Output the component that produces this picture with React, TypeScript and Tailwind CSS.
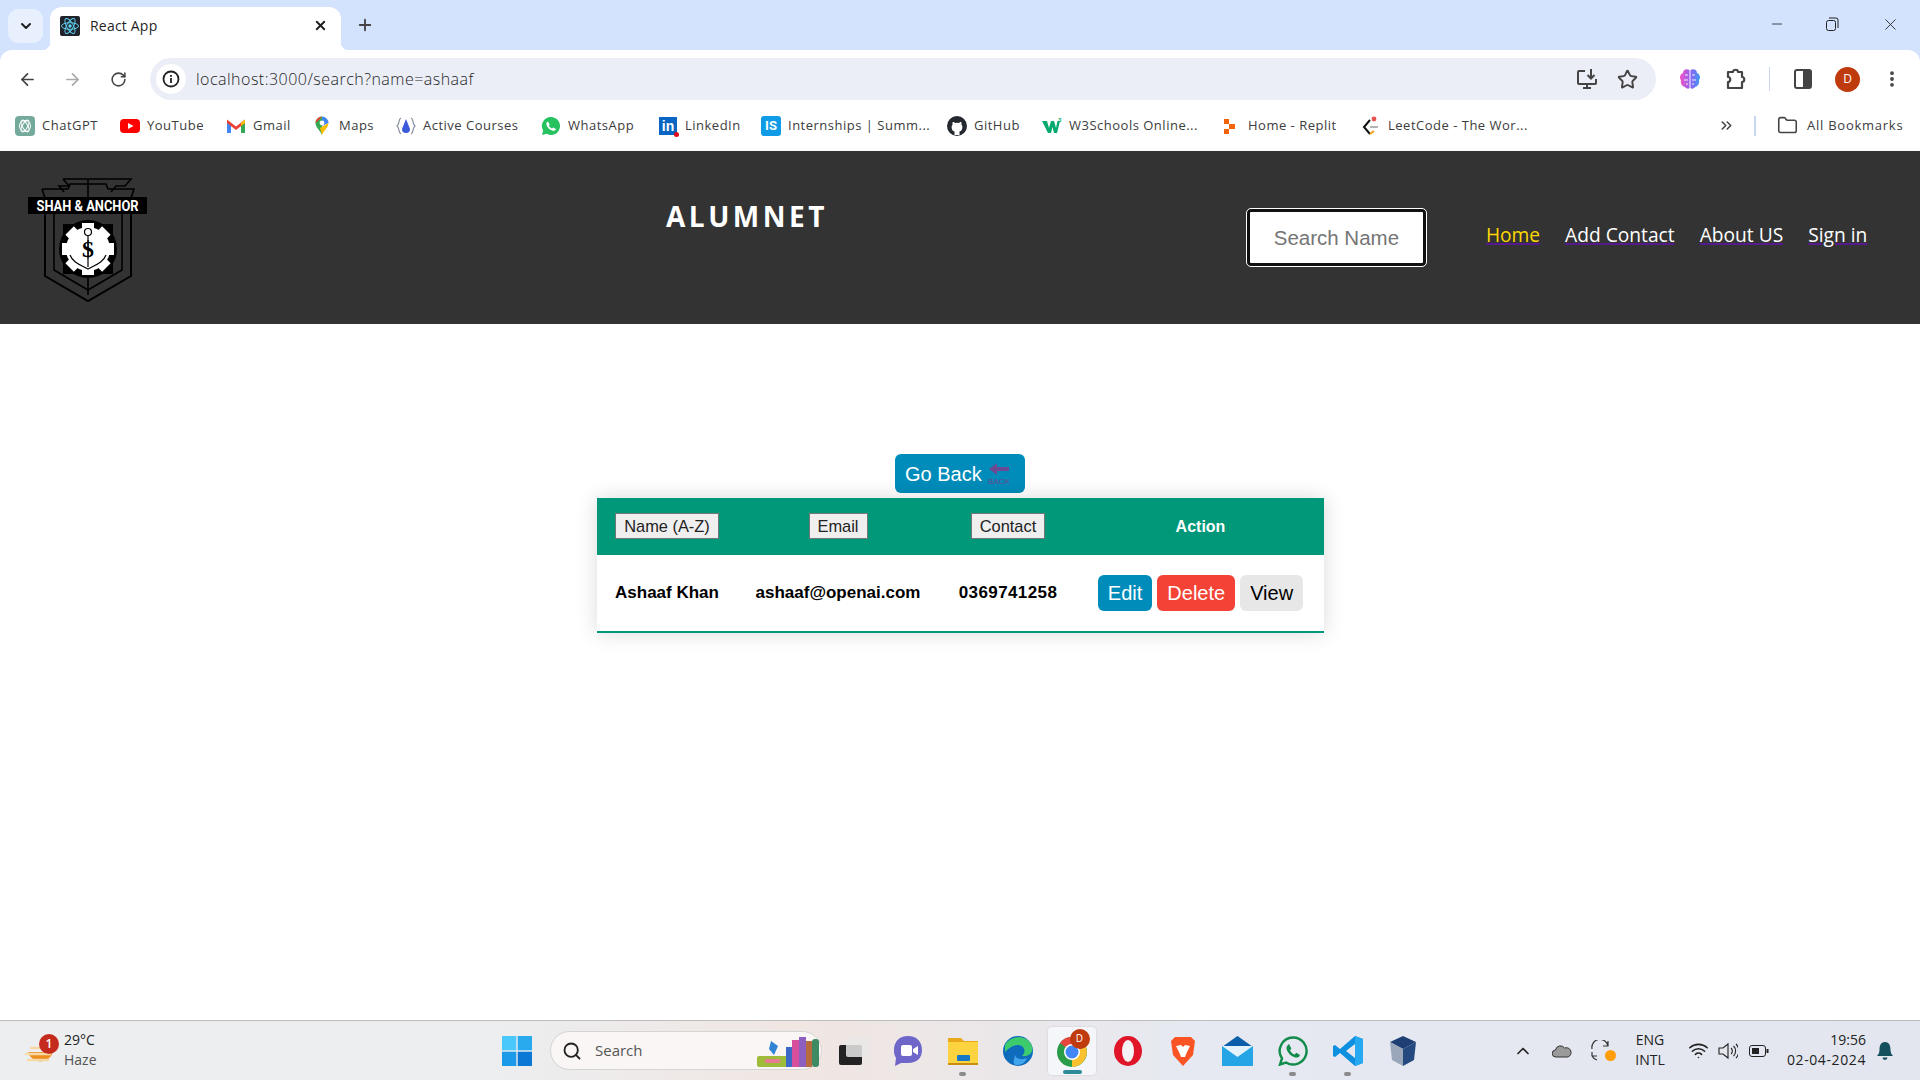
import type { ReactNode } from "react";
import {
  ArrowLeft,
  ArrowRight,
  ChevronDown,
  ChevronUp,
  ChevronsRight,
  Folder,
  Minus,
  Plus,
  RotateCw,
  Search,
  Star,
  Wifi,
  X,
  EllipsisVertical,
} from "lucide-react";

const ui = "font-['Open_Sans','Noto_Sans',sans-serif]";

function ReactFav() {
  return (
    <svg width="20" height="20" viewBox="0 0 20 20">
      <rect width="20" height="20" rx="2" fill="#20232a" />
      <g fill="none" stroke="#61dafb" strokeWidth="0.9">
        <ellipse cx="10" cy="10" rx="8.5" ry="3.3" />
        <ellipse cx="10" cy="10" rx="8.5" ry="3.3" transform="rotate(60 10 10)" />
        <ellipse cx="10" cy="10" rx="8.5" ry="3.3" transform="rotate(120 10 10)" />
      </g>
      <circle cx="10" cy="10" r="1.7" fill="#61dafb" />
    </svg>
  );
}

function Logo() {
  return (
    <svg width="120" height="126" viewBox="0 0 120 126" className="overflow-visible">
      <g fill="none" stroke="#000" strokeWidth="1.6">
        <path d="M35 2 H103 L97 9 H88 L83 15 M35 2 L41 9 H31 L36 15" />
        <path d="M14 12 H40 L42 7 H78 L80 12 H106 L102 24" />
        <path d="M14 12 L18 24" />
        <path d="M17 36 V99 L60 124 L103 99 V36" strokeWidth="2" />
        <path d="M26 36 V93 L60 113 L94 93 V36" />
        <path d="M60 3 V22 M60 100 V118" />
      </g>
      <rect x="0" y="20" width="119" height="17" fill="#000" />
      <text x="59.5" y="33.5" textAnchor="middle" fill="#fff" fontFamily="Roboto, sans-serif" fontWeight="700" fontSize="14" textLength="102" lengthAdjust="spacingAndGlyphs">
        SHAH &amp; ANCHOR
      </text>
      <rect x="35" y="47" width="50" height="50" fill="#000" />
      <circle cx="60" cy="72" r="29" fill="#000" />
      <g fill="#fff">
        <circle cx="60" cy="72" r="22" />
        {[0, 45, 90, 135, 180, 225, 270, 315].map((a) => (
          <rect key={a} x="54" y="46" width="12" height="8" transform={`rotate(${a} 60 72)`} />
        ))}
      </g>
      <g fill="none" stroke="#000" strokeWidth="1.2">
        <circle cx="60" cy="55" r="3.5" />
        <path d="M42 78 C45 86 53 88 60 92 C67 88 75 86 78 78" />
        <path d="M60 59 V90" />
      </g>
      <text x="60" y="80" textAnchor="middle" fill="#000" fontFamily="Liberation Serif, serif" fontWeight="700" fontSize="24">
        $
      </text>
    </svg>
  );
}

function BackIcon() {
  return (
    <svg width="22" height="24" viewBox="0 0 22 24" className="ml-[6px]">
      <path d="M1 7 L9 1 V5 H21 V9 H9 V13 Z" fill="#6a4a92" />
      <text x="11" y="22" textAnchor="middle" fill="#6a4a92" fontFamily="Liberation Sans, sans-serif" fontSize="8">
        BACK
      </text>
    </svg>
  );
}

const bookmarkIcons: Record<string, ReactNode> = {
  chatgpt: (
    <svg width="20" height="20" viewBox="0 0 20 20">
      <rect width="20" height="20" rx="4" fill="#74aa9c" />
      <g fill="none" stroke="#fff" strokeWidth="1">
        <circle cx="10" cy="10" r="5.5" />
        <ellipse cx="10" cy="10" rx="6.5" ry="2.6" transform="rotate(60 10 10)" />
        <ellipse cx="10" cy="10" rx="6.5" ry="2.6" transform="rotate(120 10 10)" />
      </g>
    </svg>
  ),
  youtube: (
    <svg width="20" height="20" viewBox="0 0 20 20">
      <rect y="3" width="20" height="14" rx="4" fill="#f00" />
      <path d="M8 7 L13.5 10 L8 13 Z" fill="#fff" />
    </svg>
  ),
  gmail: (
    <svg width="20" height="20" viewBox="0 0 20 20">
      <path d="M1 5 V17 H5 V8 Z" fill="#4285f4" />
      <path d="M19 5 V17 H15 V8 Z" fill="#34a853" />
      <path d="M1 3.5 L10 10.5 L19 3.5 V7 L10 14 L1 7 Z" fill="#ea4335" />
      <path d="M15 6.7 L19 3.5 V7 L15 10 Z" fill="#fbbc04" />
    </svg>
  ),
  maps: (
    <svg width="20" height="20" viewBox="0 0 20 20">
      <path d="M10 19 C8 14 3.5 11.5 3.5 7 A6.5 6.5 0 0 1 10 .5 L10 4 Z" fill="#34a853" />
      <path d="M10 .5 A6.5 6.5 0 0 1 16.5 7 L10 10 Z" fill="#4285f4" />
      <path d="M3.5 7 A6.5 6.5 0 0 1 10 .5 L7 4 Z" fill="#ea4335" />
      <path d="M16.5 7 C16.5 11.5 12 14 10 19 L8 12 Z" fill="#fbbc04" />
      <circle cx="10" cy="7" r="2.4" fill="#fff" />
    </svg>
  ),
  active: (
    <svg width="20" height="20" viewBox="0 0 20 20">
      <path d="M5 2 C2 3 4 8 1 10 C4 12 2 17 5 18 M15 2 C18 3 16 8 19 10 C16 12 18 17 15 18" fill="none" stroke="#8a8fa0" strokeWidth="1.2" />
      <path d="M10 3 L14 13 A4 4 0 0 1 6 13 Z" fill="#3b5bdb" />
    </svg>
  ),
  whatsapp: (
    <svg width="20" height="20" viewBox="0 0 20 20">
      <path d="M10 1 A9 9 0 1 1 5.5 17.8 L1 19 L2.2 14.6 A9 9 0 0 1 10 1 Z" fill="#25c25f" />
      <path d="M7 5.5 L8.7 8.4 L7.8 9.6 C8.6 11 9.6 12 11 12.6 L12.2 11.4 L15 13 C14.6 14.6 13 15.2 11.6 14.8 C8.6 14 6 11.6 5.4 8.6 C5.1 7.2 5.8 6 7 5.5 Z" fill="#fff" />
    </svg>
  ),
  linkedin: (
    <div className="relative flex h-[18px] w-[18px] items-end justify-center bg-[#0a66c2] font-['Liberation_Sans',sans-serif] text-[14px] font-bold leading-[17px] tracking-normal text-white">
      in
      <span className="absolute right-[-2px] bottom-[-2px] h-[5px] w-[5px] rounded-full bg-[#e00b1c]" />
    </div>
  ),
  internships: (
    <div className="flex h-[20px] w-[20px] items-center justify-center rounded-[3px] bg-[#0f9be6] font-['Roboto',sans-serif] text-[13px] font-bold tracking-normal text-white">IS</div>
  ),
  github: (
    <svg width="20" height="20" viewBox="0 0 20 20">
      <circle cx="10" cy="10" r="10" fill="#24292f" />
      <path d="M7.5 19 V15.6 C5.4 15 4.6 13.2 4.6 11 C4.6 10 5 9 5.6 8.4 C5.3 7.4 5.5 6.5 5.8 6 C6.8 6 7.6 6.6 8.2 7 A7 7 0 0 1 11.8 7 C12.4 6.6 13.2 6 14.2 6 C14.5 6.5 14.7 7.4 14.4 8.4 C15 9 15.4 10 15.4 11 C15.4 13.2 14.6 15 12.5 15.6 V19 Z" fill="#fff" />
    </svg>
  ),
  w3: (
    <svg width="20" height="20" viewBox="0 0 20 20">
      <path d="M0 5 H5 L7 12 L9 5 H12 L14 12 L15.5 5 H18 L15 17 H12 L10.5 11 L9 17 H6 Z" fill="#04aa6d" />
      <text x="16" y="6" fill="#04aa6d" fontFamily="Liberation Sans, sans-serif" fontSize="6" fontWeight="700">
        3
      </text>
    </svg>
  ),
  replit: (
    <svg width="20" height="20" viewBox="0 0 20 20">
      <path d="M3 3 H8 V8 H3 Z M8 8 H14 V13 H8 Z M3 13 H8 V18 H3 Z" fill="#f26207" />
    </svg>
  ),
  leetcode: (
    <svg width="20" height="20" viewBox="0 0 20 20">
      <path d="M9 4 L3 11 L9 18" fill="none" stroke="#111" strokeWidth="2" />
      <path d="M9 18 L13 15" fill="none" stroke="#f89f1b" strokeWidth="2" />
      <path d="M9 11 H17" stroke="#b3b3b3" strokeWidth="2" />
      <circle cx="13" cy="3" r="2.4" fill="#e5554f" />
    </svg>
  ),
};

const bookmarks = [
  { icon: "chatgpt", label: "ChatGPT", width: "w-[57px]", gap: "ml-[15px]" },
  { icon: "youtube", label: "YouTube", width: "w-[57px]", gap: "ml-[20px]" },
  { icon: "gmail", label: "Gmail", width: "w-[38px]", gap: "ml-[21px]" },
  { icon: "maps", label: "Maps", width: "w-[36px]", gap: "ml-[20px]" },
  { icon: "active", label: "Active Courses", width: "w-[97px]", gap: "ml-[20px]" },
  { icon: "whatsapp", label: "WhatsApp", width: "w-[69px]", gap: "ml-[20px]" },
  { icon: "linkedin", label: "LinkedIn", width: "w-[55px]", gap: "ml-[20px]" },
  { icon: "internships", label: "Internships | Summ...", width: "w-[138px]", gap: "ml-[20px]" },
  { icon: "github", label: "GitHub", width: "w-[47px]", gap: "ml-[20px]" },
  { icon: "w3", label: "W3Schools Online...", width: "w-[131px]", gap: "ml-[20px]" },
  { icon: "replit", label: "Home - Replit", width: "w-[92px]", gap: "ml-[20px]" },
  { icon: "leetcode", label: "LeetCode - The Wor...", width: "w-[142px]", gap: "ml-[20px]" },
];

function BrowserChrome() {
  return (
    <div className={`${ui} shrink-0 bg-[#d3e3fd] text-[#1f1f1f]`}>
      <div className="flex h-[50px] items-start">
        <div className="ml-[8px] mt-[9px] flex h-[34px] w-[35px] items-center justify-center rounded-[10px] bg-[#e8f0fe]">
          <ChevronDown size={16} strokeWidth={3} />
        </div>
        <div className="relative ml-[7px] mt-[7px] flex h-[43px] w-[291px] items-center rounded-t-[12px] bg-white pl-[10px] pb-[6px]">
          <span className="absolute bottom-0 left-[-8px] h-[8px] w-[8px] bg-[radial-gradient(circle_at_0_0,transparent_8px,white_8.5px)]" />
          <span className="absolute bottom-0 right-[-8px] h-[8px] w-[8px] bg-[radial-gradient(circle_at_100%_0,transparent_8px,white_8.5px)]" />
          <ReactFav />
          <span className="ml-[10px] text-[14px] tracking-[0.2px]">React App</span>
          <X size={15} strokeWidth={3} className="ml-auto mr-[13px]" />
        </div>
        <Plus size={18} strokeWidth={2.5} className="ml-[15px] mt-[16px] text-[#444]" />
        <div className="ml-auto flex h-[48px] items-center">
          <Minus size={16} strokeWidth={1.2} className="mr-[40px]" />
          <svg width="14" height="14" viewBox="0 0 14 14" fill="none" stroke="#222" strokeWidth="1" className="mr-[42px]">
            <rect x="1.5" y="3.5" width="9" height="10" rx="2" />
            <path d="M4 1 H11 A2 2 0 0 1 13 3 V11" />
          </svg>
          <X size={19} strokeWidth={1.1} className="mr-[20px]" />
        </div>
      </div>

      <div className="flex h-[50px] items-center rounded-t-[12px] bg-white pt-[8px]">
        <ArrowLeft size={19} strokeWidth={2.2} className="ml-[18px] text-[#444]" />
        <ArrowRight size={19} strokeWidth={2.2} className="ml-[26px] text-[#aaa]" />
        <RotateCw size={17} strokeWidth={2.2} className="ml-[28px] text-[#444]" />
        <div className="ml-[23px] flex h-[42px] w-[1506px] items-center rounded-full bg-[#ebeef7]">
          <div className="ml-[6px] flex h-[30px] w-[30px] items-center justify-center rounded-full bg-white">
            <svg width="18" height="18" viewBox="0 0 18 18">
              <circle cx="9" cy="9" r="7.5" fill="none" stroke="#222" strokeWidth="1.8" />
              <rect x="8.1" y="8" width="1.8" height="5" fill="#222" />
              <rect x="8.1" y="5" width="1.8" height="1.8" fill="#222" />
            </svg>
          </div>
          <span className="ml-[10px] text-[16px] font-light tracking-[0.48px]">localhost:3000/search?name=ashaaf</span>
          <svg width="22" height="22" viewBox="0 0 22 22" className="ml-auto" fill="none" stroke="#444" strokeWidth="2">
            <path d="M9 3 H3 A1 1 0 0 0 2 4 V15 A1 1 0 0 0 3 16 H19 A1 1 0 0 0 20 15 V11" />
            <path d="M7 20 H15 M11 16 V20" />
            <path d="M15 1 V10 M11.5 7 L15 10.5 L18.5 7" />
          </svg>
          <Star size={21} strokeWidth={2.2} className="ml-[19px] mr-[18px] text-[#444]" />
        </div>
        <svg width="22" height="24" viewBox="0 0 22 24" className="ml-[23px]">
          <defs>
            <linearGradient id="brain" x1="0" y1="0" x2="1" y2="0">
              <stop offset="0" stopColor="#f552c5" />
              <stop offset="0.55" stopColor="#8a63f2" />
              <stop offset="1" stopColor="#3f9bf5" />
            </linearGradient>
          </defs>
          <path d="M10.5 3 C7 1 4 3 4 6 C1 7 0 11 2 13 C1 17 4 20 6 20 C7 22 10 22 10.5 21 Z M11.5 3 C15 1 18 3 18 6 C21 7 22 11 20 13 C21 17 18 20 16 20 C15 22 12 22 11.5 21 Z" fill="url(#brain)" />
          <path d="M6 8 H9 M5 13 H9 M7 17 H9 M13 8 H16 M13 13 H17 M13 17 H15" stroke="#fff" strokeWidth="0.9" />
        </svg>
        <svg width="22" height="24" viewBox="0 0 22 24" className="ml-[24px]" fill="none" stroke="#444" strokeWidth="2.2">
          <path d="M3 5 H8 C8 2 13 2 13 5 H17 V10 C20 10 20 15 17 15 V21 H3 V15 C6 15 6 10 3 10 Z" strokeLinejoin="round" />
        </svg>
        <span className="ml-[22px] h-[24px] w-[1px] bg-[#c7d7f2]" />
        <svg width="18" height="20" viewBox="0 0 18 20" className="ml-[24px]">
          <rect x="1" y="1" width="16" height="18" rx="2" fill="none" stroke="#444" strokeWidth="2" />
          <rect x="9" y="1" width="8" height="18" fill="#444" />
        </svg>
        <div className="ml-[23px] flex h-[25px] w-[25px] items-center justify-center rounded-full bg-[#bf3a0c] text-[12px] text-white">D</div>
        <EllipsisVertical size={20} strokeWidth={2.6} className="ml-[22px] text-[#444]" />
      </div>

      <div className="flex h-[51px] items-center bg-white text-[13px] tracking-[0.5px] text-[#3c3c3c]">
        {bookmarks.map((b) => (
          <div key={b.label} className={`flex items-center ${b.gap}`}>
            <span className="flex h-[20px] w-[20px] items-center justify-center">{bookmarkIcons[b.icon]}</span>
            <span className={`ml-[7px] mr-[1px] whitespace-nowrap ${b.width}`}>{b.label}</span>
          </div>
        ))}
        <ChevronsRight size={17} strokeWidth={2.2} className="ml-[187px] text-[#444]" />
        <span className="ml-[19px] h-[20px] w-[2px] bg-[#c7d7f2]" />
        <Folder size={21} strokeWidth={1.8} className="ml-[21px] text-[#444]" />
        <span className="ml-[9px] whitespace-nowrap tracking-[0.75px]">All Bookmarks</span>
      </div>
    </div>
  );
}

function Navbar() {
  return (
    <div className="flex h-[173px] shrink-0 items-start bg-[#333] shadow-[0_2px_5px_rgba(0,0,0,0.15)]">
      <div className="ml-[28px] mt-[26px]">
        <Logo />
      </div>
      <div className={`${ui} ml-[518px] mt-[43px] text-[28px] font-bold leading-[44px] tracking-[3.5px] text-white`}>ALUMNET</div>
      <input
        placeholder="Search Name"
        className="ml-[419px] mt-[58px] h-[57px] w-[179px] rounded-[4px] border-[3px] border-[#111] bg-white text-center font-['Liberation_Sans',sans-serif] text-[20.5px] outline outline-1 outline-white placeholder:text-[#757575]"
      />
      <nav className={`${ui} ml-[60px] mt-[70px] flex gap-[25px] text-[19.2px] leading-[28px] text-white`}>
        {["Home", "Add Contact", "About US", "Sign in"].map((item, i) => (
          <a key={item} className={`underline decoration-[#551a8b] decoration-2 ${i === 0 ? "text-[#ffd700]" : ""}`}>
            {item}
          </a>
        ))}
      </nav>
    </div>
  );
}

function ActionButton({ className, children }: { className: string; children: ReactNode }) {
  return <button className={`h-[36px] rounded-[6px] px-[10px] text-[20px] ${className}`}>{children}</button>;
}

function SortButton({ children }: { children: ReactNode }) {
  return (
    <button className="h-[26px] border border-[#767676] bg-[#efefef] px-[8px] text-[16.4px] font-normal leading-[18px] text-[#222]">
      {children}
    </button>
  );
}

function Content() {
  return (
    <div className="flex flex-1 flex-col items-center bg-white pt-[130px] font-['Liberation_Sans',sans-serif]">
      <button className="flex h-[39px] w-[130px] items-center rounded-[6px] bg-[#008cba] pl-[10px] text-[20px] text-white">
        Go Back
        <BackIcon />
      </button>
      <table className="mt-[5px] w-[727px] table-fixed border-b-[2px] border-[#009879] text-center text-[17px] shadow-[0_0_20px_rgba(0,0,0,0.15)]">
        <colgroup>
          <col className="w-[141px]" />
          <col className="w-[201px]" />
          <col className="w-[139px]" />
          <col className="w-[246px]" />
        </colgroup>
        <thead>
          <tr className="h-[57px] bg-[#009879] text-white">
            <th><SortButton>Name (A-Z)</SortButton></th>
            <th><SortButton>Email</SortButton></th>
            <th><SortButton>Contact</SortButton></th>
            <th className="text-[16px] font-bold">Action</th>
          </tr>
        </thead>
        <tbody>
          <tr className="h-[77px] font-bold text-black">
            <td>Ashaaf Khan</td>
            <td>ashaaf@openai.com</td>
            <td className="tracking-[0.4px]">0369741258</td>
            <td>
              <div className="flex justify-center gap-[5px] font-normal">
                <ActionButton className="bg-[#008cba] text-white">Edit</ActionButton>
                <ActionButton className="bg-[#f44336] text-white">Delete</ActionButton>
                <ActionButton className="bg-[#e7e7e7] text-black">View</ActionButton>
              </div>
            </td>
          </tr>
        </tbody>
      </table>
    </div>
  );
}

const taskbarIcons: { key: string; node: ReactNode; dot?: boolean; active?: boolean }[] = [
  {
    key: "taskview",
    node: (
      <svg width="30" height="30" viewBox="0 0 30 30">
        <rect x="1" y="9" width="23" height="20" rx="2" fill="#222" />
        <rect x="8" y="1" width="22" height="20" rx="2" fill="#e8e8e8" fillOpacity="0.85" />
      </svg>
    ),
  },
  {
    key: "teams",
    node: (
      <svg width="30" height="30" viewBox="0 0 30 30">
        <path d="M15 0 C24 0 29 6 29 14 C29 22 24 27 15 27 H8 L2 30 L3 22 C1 19 1 16 1 14 C1 6 6 0 15 0 Z" fill="#6f66c9" />
        <rect x="8" y="9" width="11" height="11" rx="2" fill="#fff" />
        <path d="M20 13 L25 10 V19 L20 16 Z" fill="#fff" />
      </svg>
    ),
  },
  {
    key: "explorer",
    dot: true,
    node: (
      <svg width="30" height="30" viewBox="0 0 30 30">
        <path d="M0 2 H13 L16 5 H30 V28 H0 Z" fill="#e8a91a" />
        <rect y="6" width="30" height="22" fill="#fdd440" />
        <rect x="9" y="19" width="13" height="6" rx="1" fill="#1679c8" />
        <rect y="27" width="30" height="2" fill="#c98d10" />
      </svg>
    ),
  },
  {
    key: "edge",
    node: (
      <svg width="30" height="30" viewBox="0 0 30 30">
        <circle cx="15" cy="15" r="15" fill="#0f6cbd" />
        <path d="M2 9 C6 0 24 -3 29 10 C31 17 25 21 19 20 C24 16 21 9 15 9 C9 9 5 13 2 16 Z" fill="#3ecb6e" />
        <path d="M12 18 C12 24 20 24 24 22 C22 27 18 29 14 29 C8 29 12 22 12 18 Z" fill="#41a5ee" />
      </svg>
    ),
  },
  {
    key: "chrome",
    active: true,
    node: (
      <div className="relative h-[32px] w-[32px]">
        <svg width="32" height="32" viewBox="0 0 32 32">
          <circle cx="15" cy="17" r="15" fill="#2b9c48" />
          <path d="M15 17 L29 12 A15 15 0 0 0 3 8 Z" fill="#e8453c" />
          <path d="M15 17 L29 12 A15 15 0 0 1 15 32 Z" fill="#fbc02d" />
          <circle cx="15" cy="17" r="8" fill="#fff" />
          <circle cx="15" cy="17" r="6.5" fill="#4285f4" />
        </svg>
        <span className="absolute right-[-1px] top-[-6px] flex h-[20px] w-[20px] items-center justify-center rounded-full bg-[#bf3a0c] text-[10px] text-white">D</span>
      </div>
    ),
  },
  {
    key: "opera",
    node: (
      <svg width="30" height="30" viewBox="0 0 30 30">
        <ellipse cx="15" cy="15" rx="14" ry="15" fill="#e0152a" />
        <ellipse cx="15" cy="15" rx="6" ry="11" fill="#f3f3f5" />
      </svg>
    ),
  },
  {
    key: "brave",
    node: (
      <svg width="26" height="30" viewBox="0 0 26 30">
        <path d="M5 1 H21 L25 5 L23 19 L13 30 L3 19 L1 5 Z" fill="#fb5424" />
        <path d="M6 10 L11 9 L13 11 L15 9 L20 10 L17 16 L15 21 H11 L9 16 Z" fill="#fff" />
      </svg>
    ),
  },
  {
    key: "mail",
    node: (
      <svg width="31" height="30" viewBox="0 0 31 30">
        <path d="M0 11 L15.5 0 L31 11 V12 H0 Z" fill="#0a5fa8" />
        <rect y="10" width="31" height="20" fill="#25a4e6" />
        <path d="M0 10 L15.5 21 L31 10 Z" fill="#e4f2fb" />
      </svg>
    ),
  },
  {
    key: "whatsapp",
    dot: true,
    node: (
      <svg width="30" height="30" viewBox="0 0 30 30">
        <path d="M15 1.5 A13.5 13.5 0 1 1 8 26.5 L2 28.5 L4 22.5 A13.5 13.5 0 0 1 15 1.5 Z" fill="none" stroke="#128c4b" strokeWidth="2.4" />
        <path d="M11 8 L13.4 12.4 L12 14.2 C13 16.2 14.6 17.8 16.6 18.6 L18.4 16.8 L22 19 C21.4 21.4 19 22 17 21.4 C13 20.2 9.6 17 8.6 13 C8.2 11 9.2 9 11 8 Z" fill="#128c4b" />
      </svg>
    ),
  },
  {
    key: "vscode",
    dot: true,
    node: (
      <svg width="30" height="30" viewBox="0 0 30 30">
        <path d="M22 0 L30 3 V27 L22 30 L7 17 L2 21 L0 20 V10 L2 9 L7 13 Z M22 8 L13 15 L22 22 Z" fill="#0f8fe0" />
        <path d="M22 0 L30 3 V27 L22 30 Z" fill="#26a9f0" />
      </svg>
    ),
  },
  {
    key: "vbox",
    node: (
      <svg width="26" height="30" viewBox="0 0 26 30">
        <path d="M13 0 L26 6 L13 13 L0 6 Z" fill="#1e3f73" />
        <path d="M0 6 L13 13 V30 L2 24 Z" fill="#9aa7ba" />
        <path d="M26 6 L13 13 V30 L24 24 Z" fill="#23497f" />
      </svg>
    ),
  },
];

function Taskbar() {
  return (
    <div className={`${ui} flex h-[60px] shrink-0 items-center border-t border-[#bdbdbd] bg-[linear-gradient(90deg,#eceef0_0%,#eceef0_25%,#f0e6e2_42%,#e6e9f1_62%,#e3e6ee_100%)] text-[#222]`}>
      <div className="relative ml-[25px] h-[34px] w-[30px]">
        <svg width="30" height="26" viewBox="0 0 30 26" className="mt-[10px]">
          <path d="M3 8 A13 13 0 0 0 28 8 Z" fill="#ee8f1f" />
          <path d="M0 10 H26 M5 4 H16 M2 16 H24" stroke="#f6d9a6" strokeWidth="2.5" />
        </svg>
        <span className="absolute left-[14px] top-0 flex h-[20px] w-[20px] items-center justify-center rounded-full bg-[#c42b1c] text-[12px] font-semibold text-white">1</span>
      </div>
      <div className="ml-[9px] w-[36px] pb-[2px] text-[14px] leading-[20px]">
        <div>29°C</div>
        <div className="text-[#555]">Haze</div>
      </div>

      <svg width="30" height="30" viewBox="0 0 30 30" className="ml-[402px]">
        <rect width="14.3" height="14.3" fill="#4ac8fb" />
        <rect x="15.7" width="14.3" height="14.3" fill="#29aaee" />
        <rect y="15.7" width="14.3" height="14.3" fill="#1a9ae8" />
        <rect x="15.7" y="15.7" width="14.3" height="14.3" fill="#0a78d4" />
      </svg>
      <div className="ml-[18px] flex h-[39px] w-[272px] items-center rounded-full border border-[#d4d4d4] bg-[#f9f6f5] pl-[11px]">
        <Search size={20} strokeWidth={2.2} className="text-[#222]" />
        <span className="ml-[13px] text-[15px] text-[#555]">Search</span>
        <svg width="64" height="34" viewBox="0 0 64 34" className="ml-auto">
          <rect x="0" y="22" width="30" height="11" rx="2" fill="#9fbb3a" />
          <rect x="8" y="25" width="15" height="4" rx="1" fill="#e87a92" />
          <path d="M14 7 L21 12 L17 21 L12 15 Z" fill="#2f84d6" />
          <rect x="29" y="13" width="6" height="20" fill="#3c68c7" />
          <rect x="35" y="6" width="7" height="27" fill="#d74f9c" />
          <rect x="42" y="3" width="7" height="30" fill="#8d5fc0" />
          <rect x="49" y="7" width="6" height="26" fill="#b86b3c" />
          <rect x="55" y="5" width="7" height="28" rx="3" fill="#3d8a63" />
        </svg>
      </div>
      {taskbarIcons.map((t) => (
        <div key={t.key} className={`relative flex h-[48px] w-[55px] items-center justify-center ${t.key === "taskview" ? "ml-[3px]" : ""}`}>
          {t.active && <span className="absolute inset-y-0 left-[3px] right-[4px] rounded-[4px] bg-[#f5f6f9] shadow-[0_0_2px_rgba(0,0,0,0.15)]" />}
          <span className="relative">{t.node}</span>
          {t.dot && <span className="absolute bottom-[-1px] h-[4px] w-[7px] rounded-full bg-[#8a8a8a]" />}
          {t.active && <span className="absolute bottom-[1px] h-[4px] w-[19px] rounded-full bg-[#2d8a99]" />}
        </div>
      ))}

      <ChevronUp size={20} strokeWidth={2} className="ml-[83px]" />
      <svg width="20" height="14" viewBox="0 0 20 14" className="ml-[19px]">
        <path d="M4 13 A3.5 3.5 0 0 1 3.5 6 A5 5 0 0 1 12.5 4 A4 4 0 0 1 16 13 Z" fill="#9a9a9a" stroke="#333" strokeWidth="1" />
      </svg>
      <div className="relative ml-[19px] h-[22px] w-[20px]">
        <svg width="20" height="22" viewBox="0 0 20 22" fill="none" stroke="#333" strokeWidth="1.2">
          <path d="M1 9 A8 8 0 0 1 17 6 M17 1 V6 H12" />
          <path d="M1 16 H6 M1 16 V12 M1 16 A8 8 0 0 0 6 20" />
        </svg>
        <span className="absolute right-[-5px] bottom-[1px] h-[11px] w-[11px] rounded-full bg-[#ff9d0a]" />
      </div>
      <div className="ml-[17px] w-[44px] pb-[2px] text-center text-[14px] leading-[20px]">
        <div>ENG</div>
        <div>INTL</div>
      </div>
      <Wifi size={21} strokeWidth={1.8} className="ml-[16px]" />
      <svg width="20" height="18" viewBox="0 0 20 18" fill="none" stroke="#222" strokeWidth="1.1" className="ml-[9px]">
        <path d="M1 6 H5 L10 2 V16 L5 12 H1 Z" />
        <path d="M13 6 A4 4 0 0 1 13 12 M15.5 4 A7 7 0 0 1 15.5 14 M18 2 A10 10 0 0 1 18 16" />
      </svg>
      <svg width="20" height="14" viewBox="0 0 20 14" className="ml-[11px]">
        <rect x="0.5" y="1.5" width="16" height="11" rx="2.5" fill="none" stroke="#222" />
        <rect x="3" y="4" width="7" height="6" fill="#222" />
        <rect x="17.5" y="5" width="2" height="4" fill="#222" />
      </svg>
      <div className="ml-auto pb-[2px] text-right text-[14px] leading-[20px]">
        <div>19:56</div>
        <div className="tracking-[0.6px]">02-04-2024</div>
      </div>
      <svg width="18" height="20" viewBox="0 0 18 20" className="ml-[10px] mr-[26px]">
        <path d="M9 1 C4.5 1 3.5 5 3.5 9 C3.5 12 2 14 1 15 H17 C16 14 14.5 12 14.5 9 C14.5 5 13.5 1 9 1 Z" fill="#15505f" />
        <path d="M6.5 16.5 H11.5 A2.5 2.5 0 0 1 6.5 16.5 Z" fill="#15505f" />
      </svg>
    </div>
  );
}

export default function App() {
  return (
    <div className="flex h-[1080px] w-[1920px] flex-col overflow-hidden bg-white">
      <BrowserChrome />
      <Navbar />
      <Content />
      <Taskbar />
    </div>
  );
}
